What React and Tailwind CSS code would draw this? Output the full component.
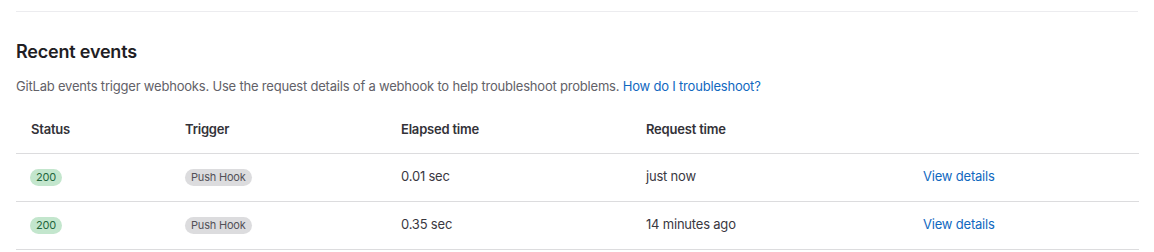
const rows = [
  { status: '200', trigger: 'Push Hook', elapsed: '0.01 sec', requested: 'just now' },
  { status: '200', trigger: 'Push Hook', elapsed: '0.35 sec', requested: '14 minutes ago' },
];

export default function App() {
  return (
    <div className="bg-white w-[1154px] h-[252px] px-4 pt-[11px] text-[#333238] tracking-[-0.2px]" style={{ fontFamily: 'Inter, "Noto Sans", sans-serif' }}>
      <div className="border-t border-[#ececef]">
        <h3 className="mt-[28px] text-[18px] leading-6 font-semibold text-[#1f1e24]">Recent events</h3>
        <p className="mt-[12px] text-[13px] leading-5 text-[#626168]">
          GitLab events trigger webhooks. Use the request details of a webhook to help troubleshoot problems.{' '}
          <a href="#" className="text-[#1068bf]">How do I troubleshoot?</a>
        </p>
        <table className="mt-[9px] w-[1123px] border-collapse text-[13px]">
          <thead>
            <tr className="h-12 border-b border-[#dcdcde]">
              <th className="w-[154px] pl-[15px] pt-[2px] text-left font-semibold">Status</th>
              <th className="w-[216px] pl-[15px] pt-[2px] text-left font-semibold">Trigger</th>
              <th className="w-[245px] pl-[15px] pt-[2px] text-left font-semibold">Elapsed time</th>
              <th className="w-[277px] pl-[15px] pt-[2px] text-left font-semibold">Request time</th>
              <th className="pl-[15px]"></th>
            </tr>
          </thead>
          <tbody>
            {rows.map((r, i) => (
              <tr key={i} className="h-12 border-b border-[#dcdcde]">
                <td className="pl-[14px]">
                  <span className="inline-flex h-[17px] items-center rounded-full bg-[#c3e6cd] px-[6px] text-[11px] text-[#24663b]">{r.status}</span>
                </td>
                <td className="pl-[15px]">
                  <span className="inline-flex h-[17px] items-center rounded-full bg-[#dcdcde] px-[6px] text-[11px] text-[#535158]">{r.trigger}</span>
                </td>
                <td className="pl-[15px] text-[#3a383f]">{r.elapsed}</td>
                <td className="pl-[15px] text-[#3a383f]">{r.requested}</td>
                <td className="pl-[15px]">
                  <a href="#" className="text-[#1068bf]">View details</a>
                </td>
              </tr>
            ))}
          </tbody>
        </table>
      </div>
    </div>
  );
}
